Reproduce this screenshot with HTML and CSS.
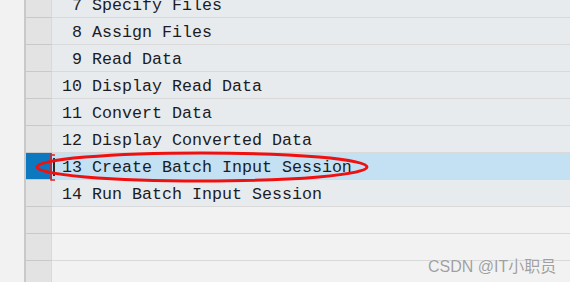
FILE: index.html
```html
<!DOCTYPE html>
<html lang="en">
<head>
    <meta charset="UTF-8">
    <title>Steps</title>
    <link rel="stylesheet" href="styles.css">
</head>
<body>
    <div class="gutter"></div>
    <div class="table">
        <div class="row"><div class="sel"></div><div class="cell"> 7 Specify Files</div></div>
        <div class="row"><div class="sel"></div><div class="cell"> 8 Assign Files</div></div>
        <div class="row"><div class="sel"></div><div class="cell"> 9 Read Data</div></div>
        <div class="row"><div class="sel"></div><div class="cell">10 Display Read Data</div></div>
        <div class="row"><div class="sel"></div><div class="cell">11 Convert Data</div></div>
        <div class="row"><div class="sel"></div><div class="cell">12 Display Converted Data</div></div>
        <div class="row selected"><div class="sel"></div><div class="cell"><span class="cursor"></span>13 Create Batch Input Session</div></div>
        <div class="row"><div class="sel"></div><div class="cell">14 Run Batch Input Session</div></div>
        <div class="row empty"><div class="sel"></div><div class="cell"></div></div>
        <div class="row empty"><div class="sel"></div><div class="cell"></div></div>
        <div class="row empty"><div class="sel"></div><div class="cell"></div></div>
    </div>
    <svg class="mark" width="570" height="282" viewBox="0 0 570 282">
        <ellipse cx="202" cy="167" rx="165" ry="14" fill="none" stroke="#f01010" stroke-width="3"/>
        <path d="M55 155 H51 V180 H55" fill="none" stroke="#e02020" stroke-width="1.5"/>
    </svg>
    <div class="watermark">CSDN @IT小职员</div>
</body>
</html>
```

FILE: styles.css
```css
body { margin: 0; display: flex; background: #f2f2f2; height: 282px; overflow: hidden; font-family: "Liberation Mono", monospace; }
.gutter { width: 24px; border-right: 2px solid #c9c9c9; background: #f2f2f2; }
.table { flex: 1; margin-top: -9px; }
.row { display: flex; height: 27px; }
.sel { width: 25px; background: #e3e3e3; border-bottom: 1px solid #c9c9c9; border-right: 1px solid #d9d9d9; }
.cell { flex: 1; background: #e8ebee; border-bottom: 1px solid #d9d9d9; padding: 2px 0 0 10px; box-sizing: border-box; white-space: pre; font-size: 16.67px; line-height: 26px; color: #1c1c24; position: relative; }
.empty .cell { background: #f2f2f2; }
.selected .sel { background: #0b78c0; border-right-color: #0b78c0; }
.selected .cell { background: #c4e1f3; }
.cursor { position: absolute; left: 1px; top: 5px; width: 2px; height: 18px; background: #2a2a2a; }
.mark { position: absolute; left: 0; top: 0; }
.watermark { position: absolute; left: 428px; top: 253px; font-family: "Liberation Sans", "Noto Sans CJK SC", sans-serif; font-size: 16px; color: #a0a0a0; text-shadow: 0 0 1px #fff; }
```
